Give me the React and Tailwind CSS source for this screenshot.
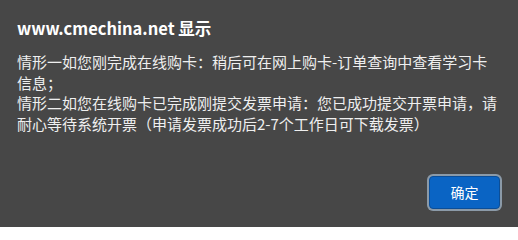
import React from "react";

const lines = [
  "情形一如您刚完成在线购卡：稍后可在网上购卡-订单查询中查看学习卡",
  "信息；",
  "情形二如您在线购卡已完成刚提交发票申请：您已成功提交开票申请，请",
  "耐心等待系统开票（申请发票成功后2-7个工作日可下载发票）",
];

const App = () => {
  return (
    <div
      className="w-[518px] h-[227px] bg-[#474747] flex flex-col pl-[17px] pr-[18px] pt-[16px] pb-[18px] overflow-hidden"
      style={{ fontFamily: '"Segoe UI", "Noto Sans CJK SC", "Noto Sans", sans-serif' }}
    >
      <div className="text-[16.5px] leading-[24px] font-bold text-white whitespace-nowrap">
        www.cmechina.net 显示
      </div>
      <div className="mt-[12px] text-[15px] leading-[20.7px] text-[#efefef]">
        {lines.map((l, i) => (
          <div key={i} className="whitespace-nowrap">
            {l}
          </div>
        ))}
      </div>
      <div className="mt-auto flex justify-end">
        <button className="w-[71px] h-[33px] rounded-[4px] border border-[#0b4e98] bg-[#0a64c4] text-white text-[14px] shadow-[0_0_0_2px_#8b9aa8]">
          确定
        </button>
      </div>
    </div>
  );
};

export default App;
